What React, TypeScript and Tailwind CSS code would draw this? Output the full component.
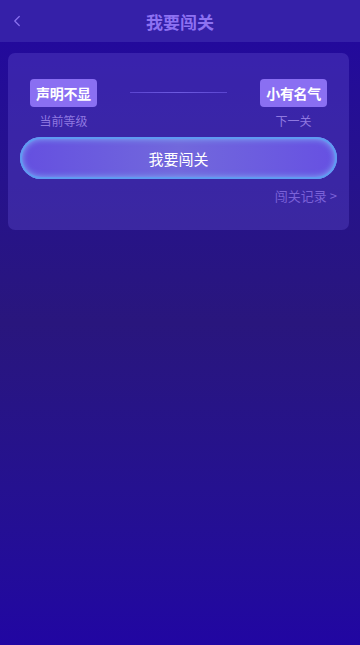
import { ChevronLeft } from "lucide-react";

const font = "font-['Noto_Sans_CJK_SC','Noto_Sans',sans-serif]";

function LevelBadge({ name, label }: { name: string; label: string }) {
  return (
    <div className="flex flex-col items-center">
      <div className="h-[28px] px-[6px] rounded-[4px] bg-[#8a6ff2] flex items-center text-white text-[14px] font-bold leading-none tracking-[-0.3px]">
        {name}
      </div>
      <div className="mt-[6px] text-[12px] leading-[16px] text-[#8f78e0]">{label}</div>
    </div>
  );
}

export default function App() {
  return (
    <div
      className={`${font} w-[360px] h-[645px] flex flex-col bg-gradient-to-b from-[#2206a0] via-[#29167d] via-50% to-[#2106a2] overflow-hidden`}
    >
      <header className="h-[42px] shrink-0 bg-[#3520a8] flex items-center relative">
        <button className="absolute left-[8px] top-[12px] text-[#8b73f0]">
          <ChevronLeft size={18} strokeWidth={1.6} />
        </button>
        <h1 className="flex-1 text-center text-[17px] font-bold text-[#8d71f2] leading-none">我要闯关</h1>
      </header>

      <div className="pl-[8px] pt-[11px]">
        <div className="w-[341px] rounded-[7px] bg-[#5a46c8]/40 px-[12px] pt-[26px] pb-[26px]">
          <div className="flex items-start justify-between px-[10px]">
            <LevelBadge name="声明不显" label="当前等级" />
            <div className="mt-[13px] w-[97px] h-[1px] bg-gradient-to-r from-[#5b45d0] via-[#6d5ae0] to-[#5b45d0]" />
            <LevelBadge name="小有名气" label="下一关" />
          </div>

          <button className="mt-[8px] w-full h-[42px] rounded-full bg-gradient-to-r from-[#654fe0] via-[#7268dc] to-[#6750e2] shadow-[inset_0_0_0_2px_#5f9af2,inset_0_0_6px_2px_#7fb0f6] text-white text-[15px] leading-none">
            我要闯关
          </button>

          <div className="mt-[9px] flex justify-end">
            <span className="text-[13px] leading-[16px] text-[#7b62d8]">闯关记录 &gt;</span>
          </div>
        </div>
      </div>
    </div>
  );
}
